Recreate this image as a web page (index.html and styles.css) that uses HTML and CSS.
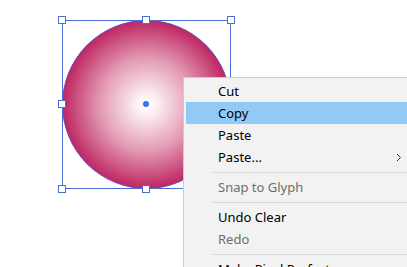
FILE: index.html
```html
<!DOCTYPE html>
<html lang="en">
<head>
    <meta charset="UTF-8">
    <meta name="viewport" content="width=device-width, initial-scale=1.0">
    <title>Context menu</title>
    <link rel="stylesheet" href="styles.css">
</head>
<body>

<div class="canvas">
    <svg class="artboard" width="407" height="267" viewBox="0 0 407 267">
        <defs>
            <radialGradient id="ballFill" cx="0.5" cy="0.5" r="0.5">
                <stop offset="0" stop-color="#ffffff"/>
                <stop offset="0.12" stop-color="#fcf0f3"/>
                <stop offset="0.55" stop-color="#e39ab4"/>
                <stop offset="1" stop-color="#bd2662"/>
            </radialGradient>
        </defs>
        <!-- selected circle -->
        <circle cx="146.5" cy="104.5" r="84" fill="url(#ballFill)" stroke="#6a4cbf" stroke-width="1"/>
        <!-- bounding box -->
        <rect x="62.5" y="20.5" width="168" height="168" fill="none" stroke="#4a6fd1"/>
        <g class="handles" fill="#ffffff" stroke="#4a6fd1">
            <rect x="58.5" y="16.5" width="7" height="7"/>
            <rect x="142.5" y="16.5" width="7" height="7"/>
            <rect x="227.5" y="16.5" width="7" height="7"/>
            <rect x="58.5" y="100.5" width="7" height="7"/>
            <rect x="227.5" y="100.5" width="7" height="7"/>
            <rect x="58.5" y="185.5" width="7" height="7"/>
            <rect x="142.5" y="185.5" width="7" height="7"/>
            <rect x="227.5" y="185.5" width="7" height="7"/>
        </g>
        <circle cx="146" cy="104" r="3" fill="#3f6ff2"/>
    </svg>

    <div class="menu">
        <div class="item">Cut</div>
        <div class="item active">Copy</div>
        <div class="item">Paste</div>
        <div class="item">Paste...
            <svg class="arrow" width="6" height="9" viewBox="0 0 6 9"><polyline points="1,1 4.5,4.5 1,8" fill="none" stroke="#333" stroke-width="1"/></svg>
        </div>
        <div class="sep"></div>
        <div class="item disabled">Snap to Glyph</div>
        <div class="sep"></div>
        <div class="item">Undo Clear</div>
        <div class="item disabled">Redo</div>
        <div class="sep"></div>
        <div class="item">Make Pixel Perfect</div>
    </div>
</div>

</body>
</html>
```

FILE: styles.css
```css
html, body {
    margin: 0;
    background: #ffffff;
    overflow: hidden;
}
.canvas {
    position: relative;
    width: 407px;
    height: 267px;
}
.artboard {
    display: block;
}
.menu {
    position: absolute;
    left: 183px;
    top: 77px;
    width: 240px;
    box-sizing: border-box;
    padding: 2px;
    background: #f2f2f2;
    border: 1px solid #cccccc;
    box-shadow: 2px 2px 3px rgba(0, 0, 0, 0.15);
    font-family: "Noto Sans", "Open Sans", sans-serif;
    font-size: 13px;
    color: #000000;
}
.item {
    display: flex;
    align-items: center;
    height: 22px;
    padding-left: 32px;
}
.item.active {
    background: #91c9f7;
}
.item.disabled {
    color: #6d6d6d;
}
.arrow {
    margin-left: auto;
    margin-right: 18px;
}
.sep {
    height: 1px;
    margin: 4px 0 3px 27px;
    background: #d7d7d7;
}
```
